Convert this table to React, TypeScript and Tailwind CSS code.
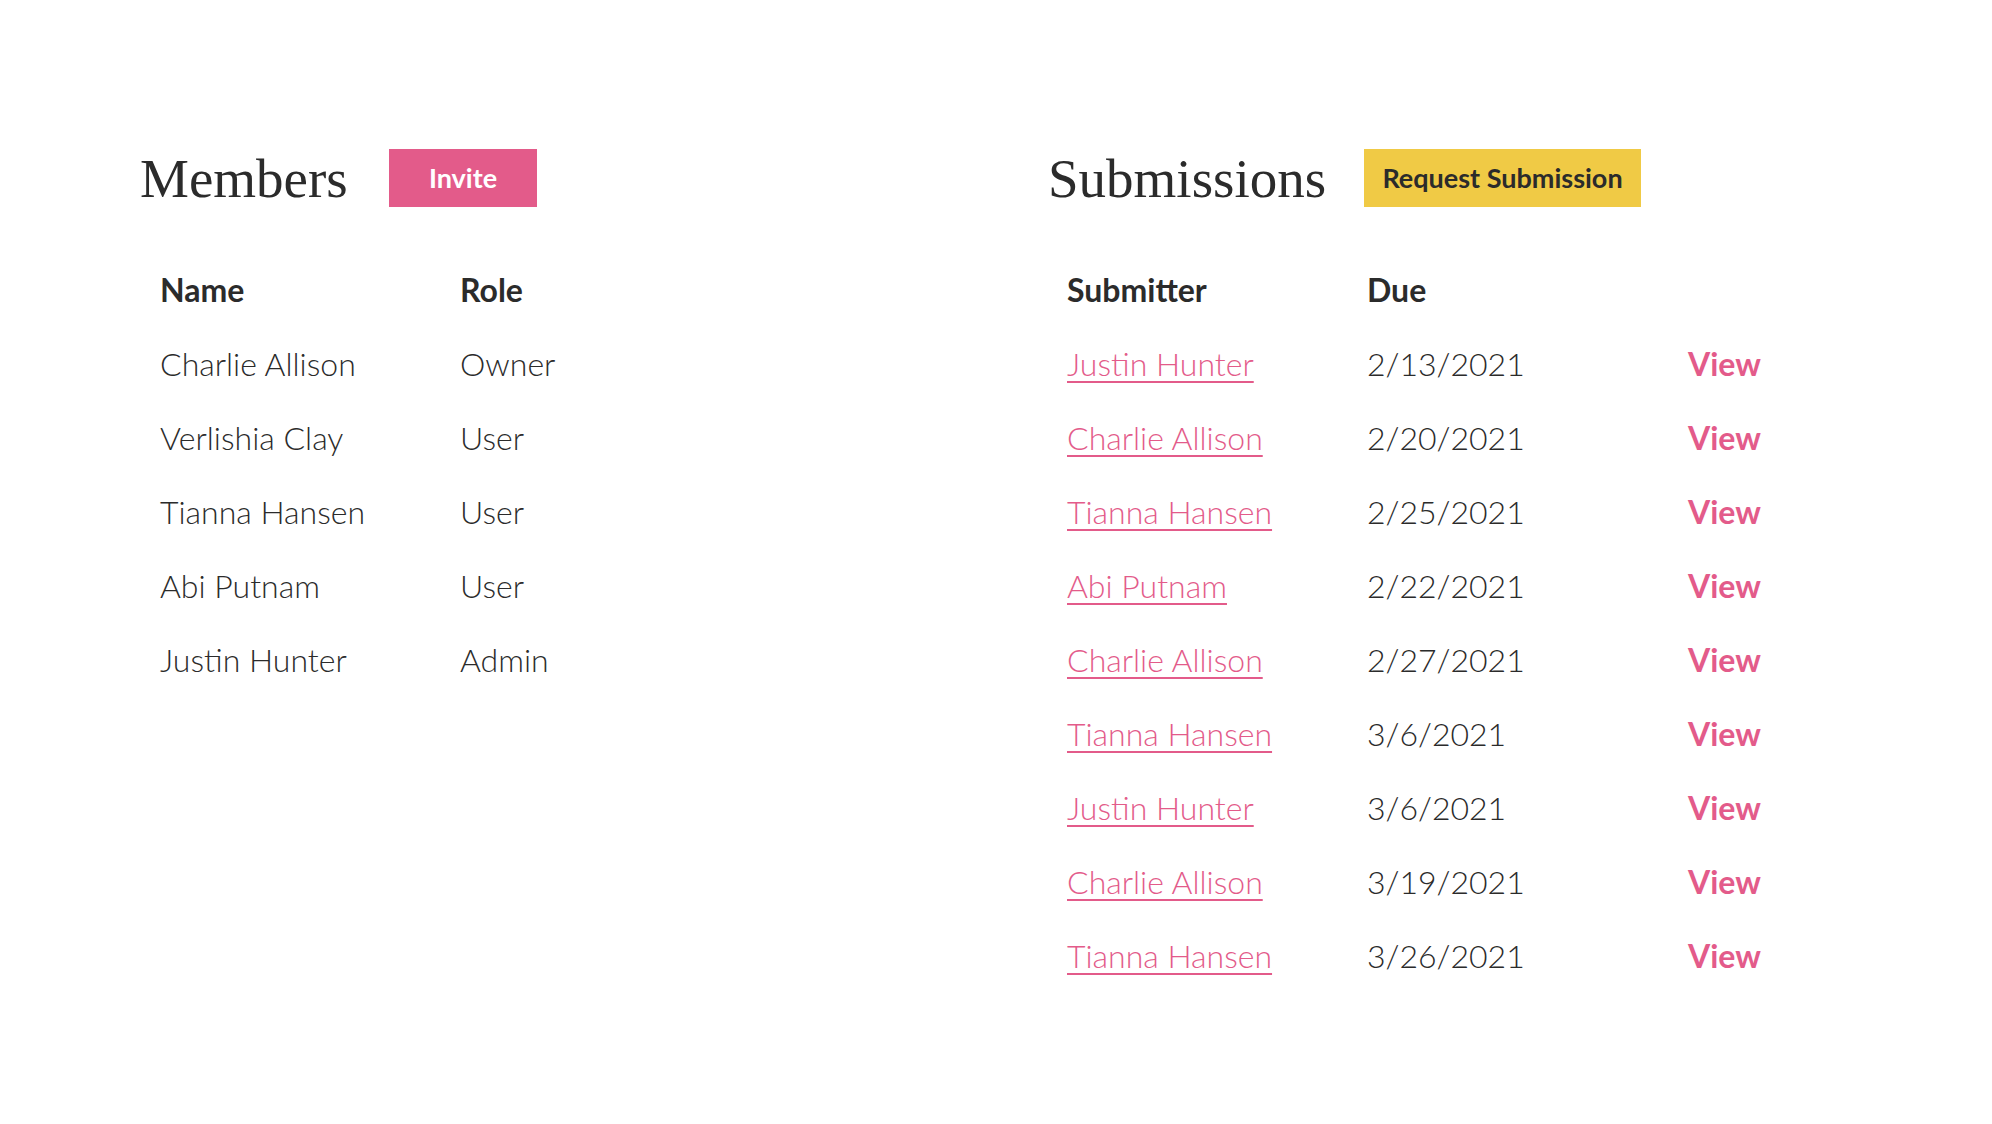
const members = [
  { name: 'Charlie Allison', role: 'Owner' },
  { name: 'Verlishia Clay', role: 'User' },
  { name: 'Tianna Hansen', role: 'User' },
  { name: 'Abi Putnam', role: 'User' },
  { name: 'Justin Hunter', role: 'Admin' },
];

const submissions = [
  { who: 'Justin Hunter', due: '2/13/2021' },
  { who: 'Charlie Allison', due: '2/20/2021' },
  { who: 'Tianna Hansen', due: '2/25/2021' },
  { who: 'Abi Putnam', due: '2/22/2021' },
  { who: 'Charlie Allison', due: '2/27/2021' },
  { who: 'Tianna Hansen', due: '3/6/2021' },
  { who: 'Justin Hunter', due: '3/6/2021' },
  { who: 'Charlie Allison', due: '3/19/2021' },
  { who: 'Tianna Hansen', due: '3/26/2021' },
];

const serif = "font-['Liberation_Serif',serif]";
const light = "font-['Lato_Light','Lato',sans-serif] font-light";

export default function App() {
  return (
    <div className="min-h-screen bg-white text-[#2b2b2b] font-['Lato','Liberation_Sans',sans-serif]">
      <div className="flex pt-[149px] pl-[140px]">
        <section className="w-[908px]">
          <div className="flex items-center h-[58px]">
            <h1 className={`${serif} text-[55px] leading-none w-[249px]`}>Members</h1>
            <button className="h-[58px] w-[148px] bg-[#e35b8a] text-white font-bold text-[27px]">Invite</button>
          </div>
          <table className="mt-[46px] text-left">
            <thead>
              <tr className="h-[74px]">
                <th className="w-[320px] pl-[20px] font-bold text-[32px]">Name</th>
                <th className="font-bold text-[32px]">Role</th>
              </tr>
            </thead>
            <tbody>
              {members.map((m) => (
                <tr key={m.name} className={`h-[74px] text-[32px] ${light}`}>
                  <td className="pl-[20px]">{m.name}</td>
                  <td>{m.role}</td>
                </tr>
              ))}
            </tbody>
          </table>
        </section>
        <section>
          <div className="flex items-center h-[58px]">
            <h1 className={`${serif} text-[55px] leading-none w-[316px]`}>Submissions</h1>
            <button className="h-[58px] w-[277px] bg-[#f0ca45] text-[#2b2b2b] font-bold text-[27px]">Request Submission</button>
          </div>
          <table className="mt-[46px] text-left">
            <thead>
              <tr className="h-[74px]">
                <th className="w-[319px] pl-[19px] font-bold text-[32px]">Submitter</th>
                <th className="w-[321px] font-bold text-[32px]">Due</th>
                <th />
              </tr>
            </thead>
            <tbody>
              {submissions.map((s, i) => (
                <tr key={i} className="h-[74px] text-[32px]">
                  <td className="pl-[19px]">
                    <a href="#" className={`${light} text-[#e35b8a] underline decoration-2 underline-offset-[5px]`}>{s.who}</a>
                  </td>
                  <td className={light}>{s.due}</td>
                  <td>
                    <a href="#" className="font-bold text-[#e35b8a]">View</a>
                  </td>
                </tr>
              ))}
            </tbody>
          </table>
        </section>
      </div>
    </div>
  );
}
